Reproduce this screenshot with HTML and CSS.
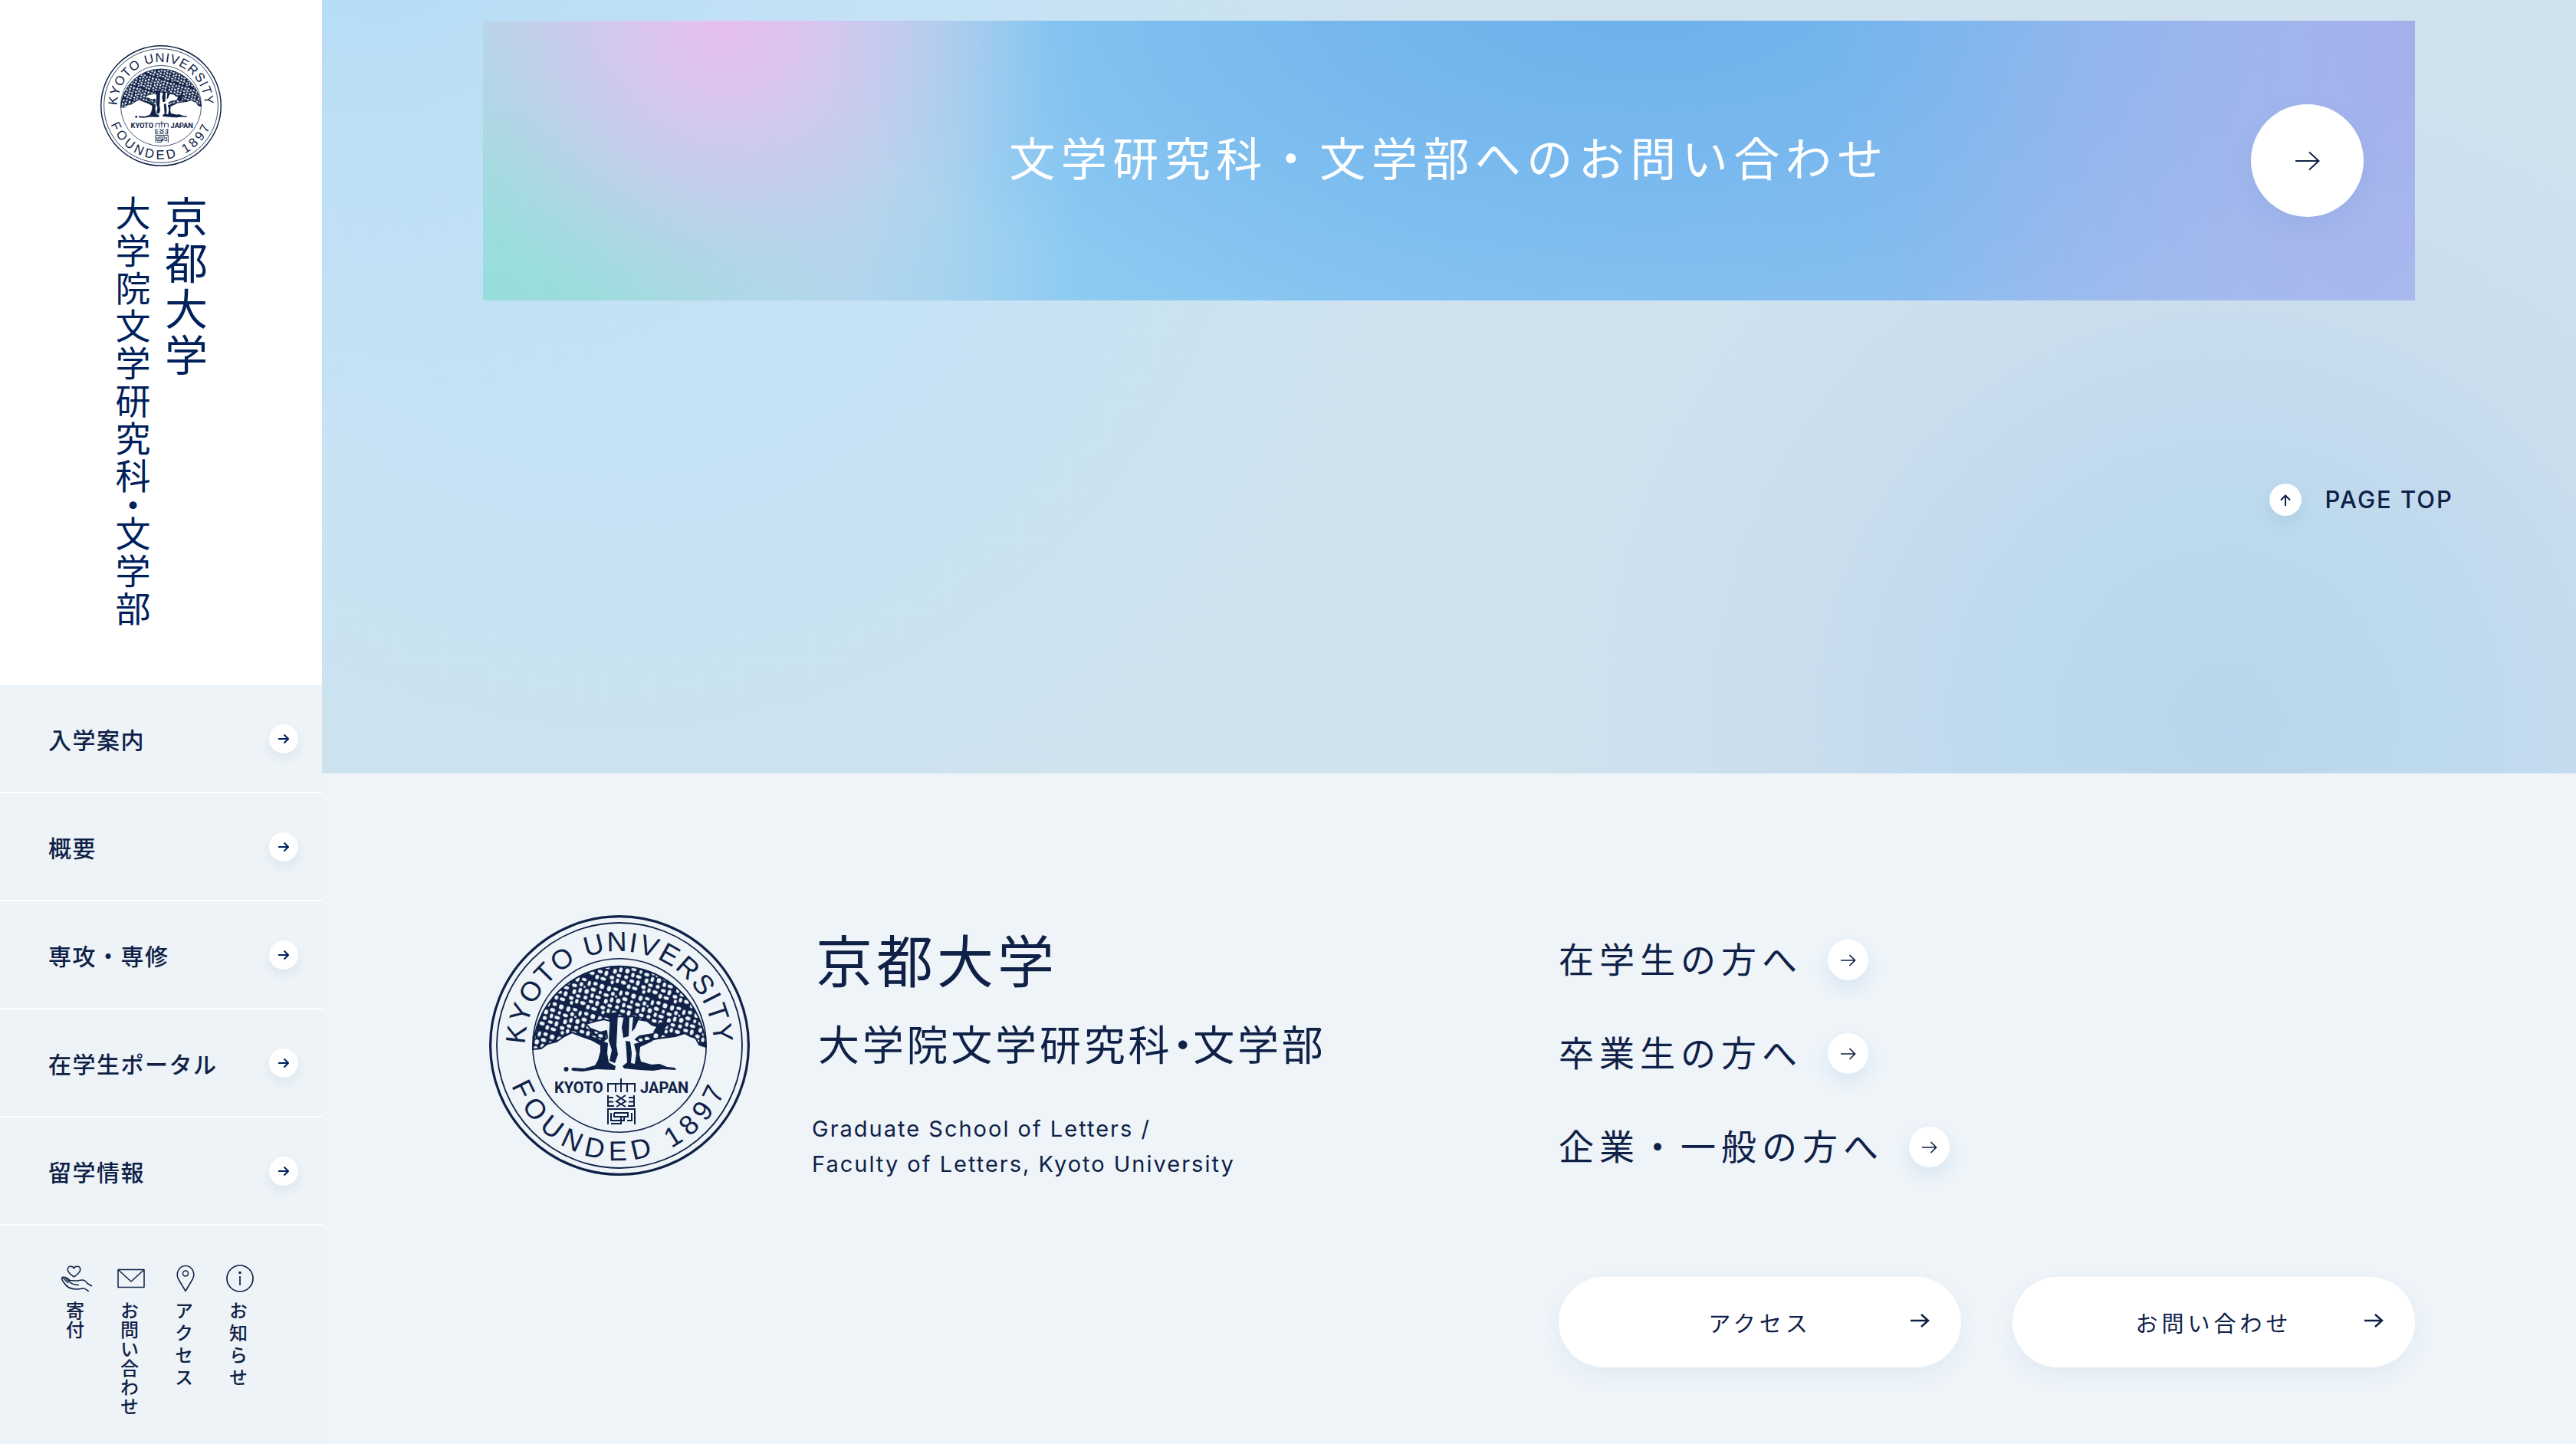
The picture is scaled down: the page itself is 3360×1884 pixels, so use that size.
FILE: index.html
```html
<!DOCTYPE html>
<html lang="ja">
<head>
  <meta charset="UTF-8">
  <title>京都大学 大学院文学研究科・文学部</title>
  <link rel="stylesheet" href="styles.css">
</head>
<body>
  <!-- shared icons -->
  <svg class="sprite" width="0" height="0" aria-hidden="true">
    <defs>
      <pattern id="leaves" width="43" height="41" patternUnits="userSpaceOnUse" patternTransform="rotate(17)">
        <path fill="#0f2147" fill-rule="evenodd" d="M0 0H43V41H0Z
          M3 5a2.6 3.4 0 1 0 5.2 0a2.6 3.4 0 1 0 -5.2 0
          M11 3a3.2 2.1 0 1 0 6.4 0a3.2 2.1 0 1 0 -6.4 0
          M20 6a2 3.6 0 1 0 4 0a2 3.6 0 1 0 -4 0
          M27 4a2.8 2.4 0 1 0 5.6 0a2.8 2.4 0 1 0 -5.6 0
          M36 5a3 3.2 0 1 0 6 0a3 3.2 0 1 0 -6 0
          M10 10a2.4 2.8 0 1 0 4.8 0a2.4 2.8 0 1 0 -4.8 0
          M16 12a1.4 1.6 0 1 0 2.8 0a1.4 1.6 0 1 0 -2.8 0
          M26 12a3.4 2.6 0 1 0 6.8 0a3.4 2.6 0 1 0 -6.8 0
          M37 13a2 2.6 0 1 0 4 0a2 2.6 0 1 0 -4 0
          M1 14a3.4 2.3 0 1 0 6.8 0a3.4 2.3 0 1 0 -6.8 0
          M11 18a2.2 3.2 0 1 0 4.4 0a2.2 3.2 0 1 0 -4.4 0
          M19 17a2.8 3.2 0 1 0 5.6 0a2.8 3.2 0 1 0 -5.6 0
          M28 20a2.2 3 0 1 0 4.4 0a2.2 3 0 1 0 -4.4 0
          M34.500 20a3.6 2.2 0 1 0 7.2 0a3.6 2.2 0 1 0 -7.2 0
          M4 22a2.4 3.2 0 1 0 4.8 0a2.4 3.2 0 1 0 -4.8 0
          M10 26a3 2.2 0 1 0 6 0a3 2.2 0 1 0 -6 0
          M20 25a2.6 2.6 0 1 0 5.2 0a2.6 2.6 0 1 0 -5.2 0
          M28 28a3.2 2.2 0 1 0 6.4 0a3.2 2.2 0 1 0 -6.4 0
          M37 28a2.4 3.4 0 1 0 4.8 0a2.4 3.4 0 1 0 -4.8 0
          M2 31a3 2.4 0 1 0 6 0a3 2.4 0 1 0 -6 0
          M11 33a2.2 3 0 1 0 4.4 0a2.2 3 0 1 0 -4.4 0
          M18 33a3.4 2.4 0 1 0 6.8 0a3.4 2.4 0 1 0 -6.8 0
          M27 36a2.4 3 0 1 0 4.8 0a2.4 3 0 1 0 -4.8 0
          M34 36a3.6 2.2 0 1 0 7.2 0a3.6 2.2 0 1 0 -7.2 0
          M5 37a2.2 2.4 0 1 0 4.4 0a2.2 2.4 0 1 0 -4.400 0"/>
      </pattern>
      <path id="arc-top" d="M47 170A123 123 0 0 1 293 170"/>
      <path id="arc-bottom" d="M20 170A150 150 0 0 0 320 170"/>
    </defs>
    <symbol id="emblem" viewBox="0 0 340 340">
      <g fill="none" stroke="currentColor">
        <circle cx="170" cy="170" r="168.4" stroke-width="3.2"/>
        <circle cx="170" cy="170" r="160" stroke-width="1.8"/>
        <circle cx="170" cy="170" r="113.2" stroke-width="1.6"/>
      </g>
      <g fill="currentColor" class="emblem-ring">
        <text font-size="36" letter-spacing="2" text-anchor="middle"><textPath href="#arc-top" startOffset="50%">KYOTO UNIVERSITY</textPath></text>
        <text font-size="36" letter-spacing="8" text-anchor="middle"><textPath href="#arc-bottom" startOffset="50%">FOUNDED 1897</textPath></text>
      </g>
      <path fill="url(#leaves)" stroke="currentColor" stroke-width="2" stroke-linejoin="round" d="M57 175A113.2 113.2 0 0 1 283 172L274 169 269 160 262 158 255 154 243 158 220 161 197 166 191 162 196 158 214 155 222 146 212 143 206 138 194 136 189 132 179 133 168 132 157 138 150 136 140 138 126 142 132 148 145 153 153 151 154 160 148 165 132 162 118 157 108 153 98 158 88 165 76 168 68 174Z"/>
      <g fill="currentColor">
        <path d="M122 157L134 158 150 165 155 167 154 180 156 192 165 197 164 202 140 201 122 204 109 203Q105 200 110 199L124 200 138 196 142 189 145 178 145 170Z"/>
        <path d="M158 128L168 126 167 150 166 170 168 182 164 193 157 190 160 176 156 164Z"/>
        <path d="M176 130L183 132 182 158 175 160 173 146Z"/>
        <path d="M178 164L184 165 186 180 185 193 190 194 192 180 189 168 197 166 215 161 212 165 197 172 196 182 198 191 212 195 222 194 232 198 242 199 244 202 226 201 214 203 196 202 176 200 174 197 180 192 179 176Z"/>
        <path d="M188 132L196 134 190 148 186 152ZM214 152L222 140 236 140 228 149Z"/>
        <circle cx="100.500" cy="201" r="3"/>
      </g>
      <g fill="currentColor" class="emblem-place">
        <text x="85" y="232" font-size="20">KYOTO</text>
        <text x="197" y="232" font-size="20">JAPAN</text>
      </g>
      <!-- seal character -->
      <g fill="none" stroke="currentColor" stroke-width="2">
        <path d="M172 213V220M155 231V220H190V231M165 220V231M180 220V231M172 220V231"/>
        <path d="M155 235V249H163M155 238H162M155 243.500H162M189 235V249H181M189 238H182M189 243.500H182"/>
        <path d="M166 235L178 243 166 250M178 235L166 243 178 250"/>
        <path d="M155 273V253H190V273M159 258V268H176V264M186 258V268H180M163 258V263H181V258H163M172 263V272H159"/>
      </g>
    </symbol>
    <symbol id="arrow" viewBox="0 0 14 14">
      <path d="M0 7H13M7.500 1.500L13 7 7.500 12.500" fill="none" stroke="currentColor" stroke-width="2"/>
    </symbol>
    <symbol id="arrow-thin" viewBox="0 0 32 26">
      <path d="M0 13H31M18 1.500L30.500 13 18 24.500" fill="none" stroke="currentColor" stroke-width="2"/>
    </symbol>
    <symbol id="arrow-link" viewBox="0 0 20 16">
      <path d="M0 8H19M11.500 1L18.500 8 11.500 15" fill="none" stroke="currentColor" stroke-width="1.700"/>
    </symbol>
    <symbol id="arrow-btn" viewBox="0 0 25 18">
      <path d="M0 9H23M14 1L23 9 14 17" fill="none" stroke="currentColor" stroke-width="2.500"/>
    </symbol>
  </svg>

  <aside class="sidebar">
    <a class="logo" href="#">
      <svg class="logo-emblem"><use href="#emblem"/></svg>
      <span class="logo-name">
        <span class="logo-univ">京都大学</span>
        <span class="logo-dept">大学院文学研究科<span class="dot-vertical">・</span>文学部</span>
      </span>
    </a>

    <nav class="nav">
      <a class="nav-item" href="#">入学案内<span class="nav-arrow"><svg width="14" height="14"><use href="#arrow"/></svg></span></a>
      <a class="nav-item" href="#">概要<span class="nav-arrow"><svg width="14" height="14"><use href="#arrow"/></svg></span></a>
      <a class="nav-item" href="#">専攻・専修<span class="nav-arrow"><svg width="14" height="14"><use href="#arrow"/></svg></span></a>
      <a class="nav-item" href="#">在学生ポータル<span class="nav-arrow"><svg width="14" height="14"><use href="#arrow"/></svg></span></a>
      <a class="nav-item" href="#">留学情報<span class="nav-arrow"><svg width="14" height="14"><use href="#arrow"/></svg></span></a>
    </nav>

    <div class="tools">
      <a class="tool" href="#">
        <svg width="42" height="36" viewBox="0 0 42 36" fill="none" stroke="currentColor" stroke-width="1.500" stroke-linejoin="round">
          <path d="M17.500 16C13 12.500 9.300 10.500 9.300 6.500C9.300 3.800 11.300 2.300 13.300 2.300C15.300 2.300 17 3.300 17.500 5C18 3.300 19.500 2.300 21.700 2.300C24 2.300 25.700 4 25.700 6.500C25.700 10.500 22 12.500 17.500 16Z"/>
          <path d="M41 28L35 24.500C33 21.500 31 20 28 20C25 20 23 21.500 18 21L12 20.500C10 18 6 16 3 16.200C0 17.500 2.500 21 4 23C7 28 13 32 20 32C25 32 27 31 30 31C32 31 34 33 37 35"/>
          <path d="M3 17L10 24M6 17L11 22C14 25 17 26.500 24 26.500M12 20.500L10 20"/>
        </svg>
        <span class="tool-label">寄付</span>
      </a>
      <a class="tool" href="#">
        <svg width="36" height="36" viewBox="0 0 36 36" fill="none" stroke="currentColor" stroke-width="1.500" stroke-linejoin="round">
          <path d="M1 6.500H35V29.500H1ZM1 6.500L18 22 35 6.500"/>
        </svg>
        <span class="tool-label">お問い合わせ</span>
      </a>
      <a class="tool" href="#">
        <svg width="36" height="36" viewBox="0 0 36 36" fill="none" stroke="currentColor" stroke-width="1.500" stroke-linejoin="round">
          <path d="M18 34.500L8.500 18.500C5 11 9.500 1.500 18 1.500S31 11 27.500 18.500Z"/>
          <circle cx="18" cy="11.500" r="3.500"/>
        </svg>
        <span class="tool-label tool-wide">アクセス</span>
      </a>
      <a class="tool" href="#">
        <svg width="36" height="36" viewBox="0 0 36 36" fill="none" stroke="currentColor" stroke-width="1.700">
          <circle cx="18" cy="18" r="17"/>
          <path d="M18 15V27"/>
          <circle cx="18" cy="10.500" r="1.800" fill="currentColor" stroke="none"/>
        </svg>
        <span class="tool-label tool-wide">お知らせ</span>
      </a>
    </div>
  </aside>

  <main class="main">
    <section class="contact">
      <a class="banner" href="#">
        <span class="banner-text">文学研究科・文学部へのお問い合わせ</span>
        <span class="banner-arrow"><svg width="32" height="26"><use href="#arrow-thin"/></svg></span>
      </a>
      <a class="page-top" href="#">
        <span class="page-top-arrow">
          <svg width="14" height="15" viewBox="0 0 14 15" fill="none" stroke="currentColor" stroke-width="2"><path d="M7 15V1.500M1 7.500L7 1.500 13 7.500"/></svg>
        </span>
        PAGE TOP
      </a>
    </section>

    <footer class="footer">
      <div class="brand">
        <svg class="brand-emblem"><use href="#emblem"/></svg>
        <div class="brand-names">
          <div class="brand-univ">京都大学</div>
          <div class="brand-dept">大学院文学研究科<span class="dot">・</span>文学部</div>
          <p class="brand-en">Graduate School of Letters /<br>Faculty of Letters, Kyoto University</p>
        </div>
      </div>
      <div class="footer-links">
        <a class="link" href="#">在学生の方へ<span class="link-arrow"><svg width="20" height="16"><use href="#arrow-link"/></svg></span></a>
        <a class="link" href="#">卒業生の方へ<span class="link-arrow"><svg width="20" height="16"><use href="#arrow-link"/></svg></span></a>
        <a class="link" href="#">企業・一般の方へ<span class="link-arrow"><svg width="20" height="16"><use href="#arrow-link"/></svg></span></a>
        <div class="btn-group">
          <a class="btn" href="#">アクセス<svg class="btn-arrow" width="25" height="18"><use href="#arrow-btn"/></svg></a>
          <a class="btn" href="#">お問い合わせ<svg class="btn-arrow" width="25" height="18"><use href="#arrow-btn"/></svg></a>
        </div>
      </div>
    </footer>
  </main>
</body>
</html>
```
FILE: styles.css
```css
* {
  box-sizing: border-box;
}

body {
  margin: 0;
  display: flex;
  min-height: 100vh;
  font-family: Inter, "Noto Sans CJK JP", sans-serif;
  color: #0f2147;
  background-color: #eef4f8;
}

a {
  color: inherit;
  text-decoration: none;
}

svg {
  display: block;
}

.sprite {
  position: absolute;
}

.emblem-ring {
  font-family: "Liberation Sans", sans-serif;
}

.emblem-place {
  font-family: Roboto, "Liberation Sans", sans-serif;
  font-weight: bold;
}

/* half-width middle dot */
.dot {
  font-feature-settings: "halt";
  letter-spacing: 0;
}

.dot-vertical {
  font-feature-settings: "vhal";
}

/* sidebar */
.sidebar {
  width: 12.5%;
  flex-shrink: 0;
  background-color: #edf3f7;
}

.logo {
  display: flex;
  flex-direction: column;
  align-items: center;
  gap: 38px;
  padding: 59px 0 74px;
  background-color: #fff;
}

.logo-emblem {
  width: 158px;
  height: 158px;
}

.logo-name {
  writing-mode: vertical-rl;
  padding-right: 6px;
  color: #00205b;
}

.logo-univ {
  display: block;
  font-size: 56px;
  line-height: 56px;
  letter-spacing: 4px;
  margin-left: 17px;
}

.logo-dept {
  display: block;
  font-size: 46px;
  line-height: 46px;
  letter-spacing: 3px;
}

.nav-item {
  display: flex;
  justify-content: space-between;
  align-items: center;
  height: 141px;
  padding: 0 31px 0 63px;
  border-bottom: 2px solid #fff;
  font-size: 30px;
  font-weight: 500;
  letter-spacing: 0.05em;
}

.nav-arrow {
  display: flex;
  justify-content: center;
  align-items: center;
  width: 38px;
  height: 38px;
  border-radius: 50%;
  background-color: #fff;
  color: #00205b;
  box-shadow: 0 6px 14px rgba(20, 90, 130, 0.08);
}

.tools {
  display: flex;
  justify-content: center;
  gap: 29px;
  padding: 51px 8px 20px 0;
}

.tool {
  display: flex;
  flex-direction: column;
  align-items: center;
  gap: 12px;
  width: 42px;
}

.tool-label {
  writing-mode: vertical-rl;
  font-size: 24px;
  line-height: 24px;
  font-weight: 500;
  letter-spacing: 1px;
  margin-right: 8px;
}

.tool-wide {
  letter-spacing: 5px;
}

/* contact */
.main {
  flex: 1;
}

.contact {
  padding: 27px 160px 336px 210px;
  background:
    radial-gradient(circle 880px at 84.500% 93%, #bad6ec 0, #bedaed 34%, #c3daee 46%, rgba(199, 220, 237, 0.85) 60%, rgba(208, 226, 238, 0) 100%),
    radial-gradient(circle 700px at 2% -16%, #b2dbf7 0, rgba(184, 222, 246, 0.7) 45%, rgba(198, 226, 246, 0) 100%),
    radial-gradient(circle 1250px at 13% 12%, #c3e1f5 0, #c6e2f5 40%, #cae3f1 62%, #d0e2ee 88%);
  background-color: #d0e2ee;
}

.banner {
  position: relative;
  display: flex;
  justify-content: center;
  align-items: center;
  height: 365px;
  margin-right: 50px;
  color: #fff;
  background:
    radial-gradient(ellipse 420px 400px at 12.500% 0, #e6bfef 0, rgba(222, 195, 240, 0.9) 25%, rgba(208, 200, 238, 0.7) 50%, rgba(195, 208, 236, 0.3) 78%, rgba(190, 210, 236, 0) 100%),
    radial-gradient(circle 480px at 0 105%, #96dedb 0, rgba(154, 221, 220, 0.85) 38%, rgba(170, 216, 230, 0) 100%),
    radial-gradient(circle 820px at 102% 10%, #a4aeec 0, rgba(164, 178, 236, 0.8) 25%, rgba(140, 186, 240, 0) 100%),
    radial-gradient(ellipse 1100px 480px at 60% -8%, #6cb1eb 0, rgba(114, 181, 238, 0.8) 40%, rgba(136, 198, 241, 0) 100%),
    linear-gradient(93deg, #bcd6ea 0, #b4d6ec 19%, #a8d4ef 24%, #8ecbf2 31%, #88c5f1 50%, #8cbfef 75%, #b2c2ef 100%);
}

.banner-text {
  font-size: 60px;
  line-height: 60px;
  letter-spacing: 0.125em;
  padding-bottom: 4px;
}

.banner-arrow {
  position: absolute;
  top: 109px;
  right: 67px;
  display: flex;
  justify-content: center;
  align-items: center;
  width: 147px;
  height: 147px;
  border-radius: 50%;
  background-color: #fff;
  color: #0f2147;
  box-shadow: 0 12px 30px rgba(70, 120, 200, 0.12);
}

.page-top {
  display: flex;
  align-items: center;
  gap: 31px;
  width: fit-content;
  height: 42px;
  margin: 239px 0 0 auto;
  font-size: 31px;
  line-height: 42px;
  font-weight: 500;
  letter-spacing: 2px;
}

.page-top-arrow {
  display: flex;
  justify-content: center;
  align-items: center;
  width: 42px;
  height: 42px;
  border-radius: 50%;
  background-color: #fff;
  box-shadow: 0 8px 20px rgba(60, 140, 190, 0.14);
}

/* footer */
.footer {
  display: grid;
  grid-template-columns: 1403fr 1117fr;
  padding: 185px 210px 90px;
}

.brand {
  display: flex;
  gap: 81px;
  padding-left: 8px;
}

.brand-emblem {
  width: 340px;
  height: 340px;
}

.brand-names {
  padding-top: 24px;
}

.brand-univ {
  padding-left: 5px;
  font-size: 74px;
  line-height: 74px;
  letter-spacing: 5px;
}

.brand-dept {
  margin-top: 43px;
  padding-left: 8px;
  font-size: 54px;
  line-height: 60px;
  letter-spacing: 0.07em;
}

.brand-en {
  margin: 55px 0 0;
  font-size: 29px;
  line-height: 46px;
  letter-spacing: 2px;
}

.footer-links {
  display: flex;
  flex-direction: column;
  gap: 69px;
  padding-top: 32px;
}

.link {
  display: flex;
  align-items: center;
  gap: 33px;
  height: 53px;
  font-size: 46px;
  line-height: 53px;
  letter-spacing: 7px;
}

.link-arrow {
  display: flex;
  justify-content: center;
  align-items: center;
  width: 53px;
  height: 53px;
  border-radius: 50%;
  background-color: #fff;
  box-shadow: 0 10px 20px rgba(60, 140, 220, 0.12);
}

.btn-group {
  display: flex;
  gap: 67px;
  margin-top: 74px;
}

.btn {
  position: relative;
  flex: 1;
  display: flex;
  justify-content: center;
  align-items: center;
  height: 118px;
  border-radius: 59px;
  background-color: #fff;
  font-size: 29px;
  letter-spacing: 5px;
  box-shadow: 0 10px 24px rgba(80, 120, 200, 0.07);
}

.btn-arrow {
  position: absolute;
  right: 41px;
  top: 48px;
}
```
